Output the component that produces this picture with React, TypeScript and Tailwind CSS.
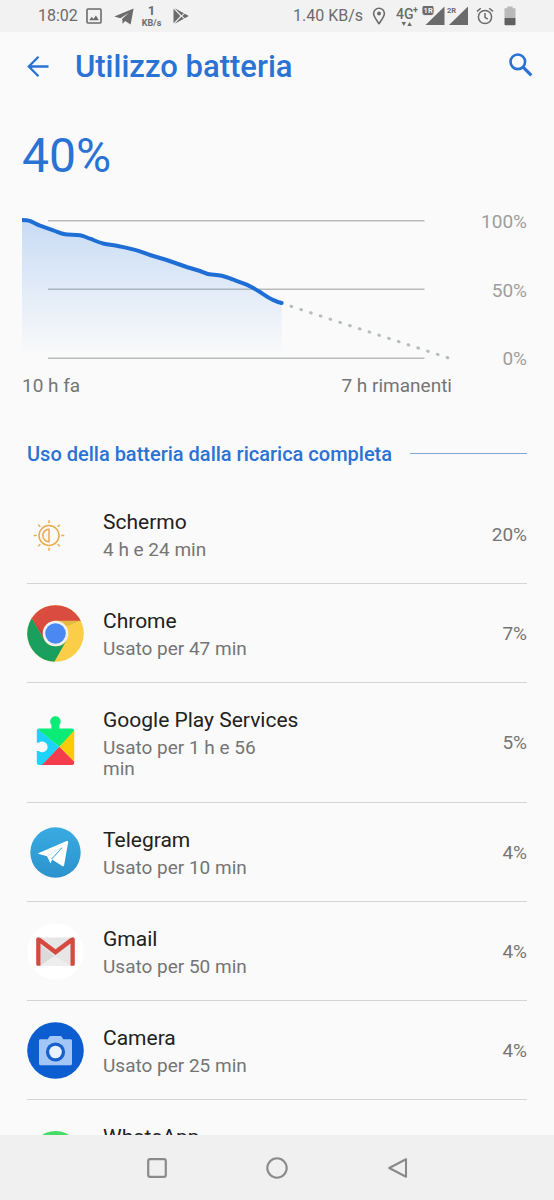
/**
 * BatteryUsage — battery level, discharge chart and per-app usage list.
 */

import type { ReactNode } from 'react';

interface UsageRow {
  name: string;
  detail?: string;
  percent?: string;
  icon: ReactNode;
}

const ROWS: UsageRow[] = [
  { name: 'Schermo', detail: '4 h e 24 min', percent: '20%', icon: <ScreenIcon /> },
  { name: 'Chrome', detail: 'Usato per 47 min', percent: '7%', icon: <ChromeIcon /> },
  {
    name: 'Google Play Services',
    detail: 'Usato per 1 h e 56 min',
    percent: '5%',
    icon: <PlayServicesIcon />,
  },
  { name: 'Telegram', detail: 'Usato per 10 min', percent: '4%', icon: <TelegramIcon /> },
  { name: 'Gmail', detail: 'Usato per 50 min', percent: '4%', icon: <GmailIcon /> },
  { name: 'Camera', detail: 'Usato per 25 min', percent: '4%', icon: <CameraIcon /> },
  { name: 'WhatsApp', icon: <WhatsAppIcon /> },
];

export default function App() {
  return (
    <div className="flex h-screen flex-col bg-[#fafafa] font-['Roboto',sans-serif] text-[#757575]">
      <StatusBar />
      <header className="flex h-[70px] shrink-0 items-center pr-[21px] pl-[27px]">
        <button type="button" aria-label="Indietro" className="text-[#2a72d4]">
          <svg viewBox="0 0 22 22" className="block size-[22px]" fill="none" stroke="currentColor" strokeWidth="2.3">
            <path d="M21.5 10.5H2M11.5 0.8L1.8 10.5l9.7 9.7" />
          </svg>
        </button>
        <h1 className="ml-[26px] flex-1 text-[31px] leading-9 font-medium text-[#2a72d4]">
          Utilizzo batteria
        </h1>
        <button type="button" aria-label="Cerca" className="text-[#2a72d4]">
          <svg viewBox="0 0 24 24" className="mb-1 block size-6" fill="none" stroke="currentColor">
            <circle cx="8.8" cy="8.8" r="7.3" strokeWidth="2.6" />
            <path d="M14.3 14.3l8 8" strokeWidth="3.2" />
          </svg>
        </button>
      </header>

      <main className="min-h-0 flex-1 overflow-hidden">
        <section className="pr-[27px] pl-[22px]">
          <p className="py-[26px] text-[48px] leading-[56px] text-[#2a72d4]">40%</p>
          <BatteryChart />
        </section>

        <section className="px-[27px] pt-11">
          <div className="flex items-center gap-[18px] pb-[19px]">
            <h2 className="text-[20px] leading-6 font-medium whitespace-nowrap text-[#2a72d4]">
              Uso della batteria dalla ricarica completa
            </h2>
            <div className="mb-0.5 h-px flex-1 bg-[#7fa9cf]" />
          </div>
          <ul>
            {ROWS.map((row) => (
              <li
                key={row.name}
                className="flex items-center gap-[19px] border-b border-[#d4d4d4] py-[22px]"
              >
                <div className="-my-2 w-[57px] shrink-0">{row.icon}</div>
                <div className="-mt-px mb-px min-h-[54px] flex-1">
                  <p className="text-[21px] leading-[33px] text-[#212121]">{row.name}</p>
                  {row.detail && (
                    <p className="max-w-[180px] text-[19px] leading-[21px]">{row.detail}</p>
                  )}
                </div>
                {row.percent && (
                  <span className="text-[19px] leading-[21px]">{row.percent}</span>
                )}
              </li>
            ))}
          </ul>
        </section>
      </main>

      <NavBar />
    </div>
  );
}

function StatusBar() {
  return (
    <div className="flex h-8 shrink-0 items-center justify-between bg-[#f2f2f2] px-[38px] text-[16px] leading-5 text-[#6b6b6b]">
      <div className="flex items-center">
        <span>18:02</span>
        <svg viewBox="0 0 16 16" className="ml-2 size-4" fill="none" stroke="currentColor" strokeWidth="1.6">
          <rect x="1" y="1" width="14" height="14" rx="1" />
          <path d="M3.3 12.2l2.4-3.4 1.8 2.1 2.4-3.4 3 4.7z" fill="currentColor" stroke="none" />
        </svg>
        <svg viewBox="0 0 20 17" className="ml-3 h-[17px] w-5" fill="currentColor">
          <path d="M0.3 8.6L19.6 0.4l-3 16.2-5.4-3.5-2.6 2.6-.4-4.9 6.9-6-8.8 5.4z" />
        </svg>
        <span className="ml-2 flex flex-col items-center font-bold">
          <span className="text-[13px] leading-[14px]">1</span>
          <span className="text-[9px] leading-[10px]">KB/s</span>
        </span>
        <svg viewBox="0 0 16 16" className="ml-3 size-4" fill="currentColor">
          <path d="M0.5 0.8v14.4L7.4 8z" />
          <path d="M1.6 0.3l9.3 4.9L8.4 7.3zM1.6 15.7l9.3-4.9-2.5-2.1zM11.8 5.7L15.8 8l-4 2.3L9.2 8z" />
        </svg>
      </div>
      <div className="flex items-center">
        <span>1.40 KB/s</span>
        <svg viewBox="0 0 14 18" className="ml-[9px] h-[18px] w-3.5" fill="none" stroke="currentColor" strokeWidth="1.6">
          <path d="M7 16.6C4 12.6 1.6 9.6 1.6 6.6a5.4 5.4 0 0 1 10.8 0c0 3-2.4 6-5.4 10z" />
          <circle cx="7" cy="6.6" r="2" fill="currentColor" stroke="none" />
        </svg>
        <svg viewBox="0 0 22 22" className="ml-2.5 size-[22px]" fill="currentColor">
          <text x="0" y="14" fontSize="14" fontWeight="500">4G</text>
          <text x="17" y="8" fontSize="9" fontWeight="700">+</text>
          <path d="M5.5 17h4.6l-2.3 4zM11.3 21h4.6l-2.3-4z" />
        </svg>
        <svg viewBox="0 0 24 20" className="ml-1 h-5 w-6" fill="currentColor">
          <path d="M22.5 0.5V19H3.5z" />
          <rect x="0" y="-1" width="12" height="10.5" rx="3" stroke="#f2f2f2" strokeWidth="0.8" />
          <text x="1.6" y="7.2" fontSize="7.5" fontWeight="700" fill="#f2f2f2">1R</text>
        </svg>
        <svg viewBox="0 0 24 20" className="h-5 w-6" fill="currentColor">
          <path d="M22 0.5V19H3z" />
          <rect x="0" y="0" width="11" height="8" fill="#f2f2f2" />
          <text x="1" y="6.6" fontSize="7.5" fontWeight="700">2R</text>
        </svg>
        <svg viewBox="0 0 18 18" className="ml-1.5 size-[18px]" fill="none" stroke="currentColor" strokeWidth="1.5">
          <circle cx="9" cy="10" r="6.6" />
          <path d="M9 6v4.3l2.8 1.8M1 4.4l3.8-3.2M17 4.4l-3.8-3.2" />
        </svg>
        <svg viewBox="0 0 12 20" className="ml-2.5 h-5 w-3">
          <path d="M3.3 0.5h5.4v1.8h2.8V12H0.5V2.3h2.8z" fill="#b9b9b9" />
          <path d="M0.5 12h11v6.3a1 1 0 0 1-1 1h-9a1 1 0 0 1-1-1z" fill="#616161" />
        </svg>
      </div>
    </div>
  );
}

const LEVEL_PATH =
  'M0 10C3 10 6 10.2 8 11C11 12 15 14.6 18 15.7L31.3 20.3C36 22 39 23.6 43 24.3S53 24.4 58 25.3S64.5 27.5 68 28.7S77 32.6 82 33.7S90 34.6 94.7 35.7S108 38.4 114.7 40.3S123 43.4 128 45L144.7 50L164.7 57L178 61C182 62.3 184 63.7 187.3 64.3S195 64.7 199.7 65.7S207 68.2 211.3 69.7S220 72.6 224.7 74.7S232 78.5 236.3 81S245 87 249.7 89.3S256 92.4 259.7 93';

function BatteryChart() {
  return (
    <>
      <div className="flex">
        <svg viewBox="0 0 430 161" className="block min-w-0 flex-1" role="img" aria-label="Livello batteria">
          <defs>
            <linearGradient id="level" x1="0" y1="0" x2="0" y2="1">
              <stop offset="0" stopColor="#2a7be4" stopOpacity="0.24" />
              <stop offset="1" stopColor="#2a7be4" stopOpacity="0" />
            </linearGradient>
          </defs>
          <path d="M26 10.7H402.5M26 79.3H402.5M26 148.3H402.5" stroke="#b9bbbb" strokeWidth="1.4" />
          <path d={`${LEVEL_PATH}V146H0Z`} fill="url(#level)" />
          <path d={LEVEL_PATH} fill="none" stroke="#1f6ed6" strokeWidth="4" />
          <circle cx="259.7" cy="93" r="2" fill="#1f6ed6" />
          <path
            d="M269 96.3L426 147.8"
            stroke="#b7bdbd"
            strokeWidth="3"
            strokeLinecap="round"
            strokeDasharray="0.8 9.47"
          />
        </svg>
        <div className="flex w-[75px] flex-col justify-between text-right text-[19px] leading-6 text-[#9e9e9e]">
          <span>100%</span>
          <span>50%</span>
          <span>0%</span>
        </div>
      </div>
      <div className="mt-[3px] mr-[75px] flex justify-between text-[19px] leading-6">
        <span>10 h fa</span>
        <span>7 h rimanenti</span>
      </div>
    </>
  );
}

function NavBar() {
  return (
    <nav className="flex h-[65px] shrink-0 items-center justify-center gap-24 bg-[#f0f0f0] text-[#8a8a8a]">
      <button type="button" aria-label="App recenti">
        <svg viewBox="0 0 24 24" className="block size-6" fill="none" stroke="currentColor" strokeWidth="2.2">
          <rect x="3.2" y="3.2" width="17.6" height="17.6" rx="1.8" />
        </svg>
      </button>
      <button type="button" aria-label="Home">
        <svg viewBox="0 0 24 24" className="block size-6" fill="none" stroke="currentColor" strokeWidth="2.1">
          <circle cx="12" cy="12" r="9.7" />
        </svg>
      </button>
      <button type="button" aria-label="Indietro">
        <svg viewBox="0 0 24 24" className="block size-6" fill="none" stroke="currentColor" strokeWidth="2.1" strokeLinejoin="round">
          <path d="M21 3.2v17.6L4.2 12z" />
        </svg>
      </button>
    </nav>
  );
}

function ScreenIcon() {
  return (
    <svg viewBox="0 0 57 57" className="block w-full" fill="none" stroke="#e9ab4c" strokeWidth="1.5">
      <circle cx="22" cy="29.5" r="10" />
      <path d="M22 23.3v12.4a6.2 6.2 0 0 1 0-12.4z" />
      <path d="M22 14.2v3M22 41.8v3M6.7 29.5h3M34.3 29.5h3M11.2 18.7l2.1 2.1M30.7 38.2l2.1 2.1M11.2 40.3l2.1-2.1M30.7 20.8l2.1-2.1" />
    </svg>
  );
}

function ChromeIcon() {
  return (
    <svg viewBox="0 0 57 57" className="block w-full">
      <defs>
        <clipPath id="chrome-disc">
          <circle cx="28.5" cy="28.5" r="28.3" />
        </clipPath>
      </defs>
      <g clipPath="url(#chrome-disc)">
        <rect width="57" height="57" fill="#fcce47" />
        <path d="M0 4.5l5.1 9.2 12.3 21.2a12.8 12.8 0 0 0 22.2 0L27.3 57H0z" fill="#19a05f" />
        <path d="M28.5 15.7H57V0H0l5.1 13.7 12.3 21.2z" fill="#d94c3f" />
        <path d="M28.5 15.7h24.9L40.5 21z" fill="#3e2723" fillOpacity="0.12" />
        <path d="M5.1 13.7l12.3 21.2-1-7z" fill="#3e2723" fillOpacity="0.15" />
      </g>
      <circle cx="28.5" cy="28.5" r="12.8" fill="#f1f1f1" />
      <circle cx="28.5" cy="28.5" r="10.3" fill="#4a88f2" />
    </svg>
  );
}

function PlayServicesIcon() {
  return (
    <svg viewBox="0 0 57 57" className="block w-full">
      <defs>
        <clipPath id="puzzle">
          <path d="M12 14.5h12.4V11a5.3 5.3 0 1 1 8 0v3.5H45a2.2 2.2 0 0 1 2.2 2.2v32.1A2.2 2.2 0 0 1 45 51H12a2.2 2.2 0 0 1-2.2-2.2V37h1.9a5.4 5.4 0 1 0 0-8.2H9.8V16.7A2.2 2.2 0 0 1 12 14.5z" />
        </clipPath>
      </defs>
      <g clipPath="url(#puzzle)">
        <path d="M8 12.5v40h6.2l18.1-19.7z" fill="#1ed3fa" />
        <path d="M8 12.5V0h41v16.7L32.3 32.8 10 14.6z" fill="#0bec77" />
        <path d="M49 14.5v35.1L32.3 32.8z" fill="#fbcb09" />
        <path d="M14.2 51.8h35v-2.2L32.3 32.8z" fill="#f53c4c" />
      </g>
    </svg>
  );
}

function TelegramIcon() {
  return (
    <svg viewBox="0 0 57 57" className="block w-full">
      <defs>
        <linearGradient id="telegram" x1="0" y1="0" x2="0" y2="1">
          <stop offset="0" stopColor="#39abe2" />
          <stop offset="1" stopColor="#2b92cc" />
        </linearGradient>
      </defs>
      <circle cx="28.5" cy="28.5" r="25.2" fill="url(#telegram)" />
      <path
        d="M11.8 28.9L39.6 17.1c1-.4 1.7.2 1.5 1.3l-4 22.8c-.2 1.2-1 1.5-2 .8l-10-6.6L36 22.8 20 32.2l-7.9-2.1c-1-.3-1-.9-.3-1.2z"
        fill="#fff"
      />
      <path d="M20 32.2l16-9.4-10.9 12.6-1.6 4z" fill="#fff" />
      <path d="M24.5 35L34.8 24" stroke="#45a9dc" strokeWidth="1" />
    </svg>
  );
}

function GmailIcon() {
  return (
    <svg viewBox="0 0 57 57" className="block w-full">
      <circle cx="28.5" cy="28.5" r="28.2" fill="#fff" />
      <rect x="9.5" y="14.5" width="38" height="28" rx="1.5" fill="#e6e6e6" />
      <path d="M13.5 42.5V22l15 12.5z" fill="#dadada" />
      <path d="M13.5 42.7l11.5-8.5 3.5-1 15 9.5z" fill="#eeeeee" />
      <path
        d="M9.2 16.6c0-1.6 1.2-2.4 2.6-2.2l1.7.6 15 11.3L43.5 15l1.7-.6c1.4-.2 2.6.6 2.6 2.2v24.6c0 .9-.6 1.5-1.5 1.5h-2.8V20.5l-15 11.6-15-11.6v22.2h-2.8c-.9 0-1.5-.6-1.5-1.5z"
        fill="#d54a40"
      />
    </svg>
  );
}

function CameraIcon() {
  return (
    <svg viewBox="0 0 57 57" className="block w-full">
      <circle cx="28.5" cy="28.5" r="28.3" fill="#0c5dd0" />
      <path
        d="M13.5 17.3h7.2l1.6-2.6c.3-.5.7-.7 1.2-.7h10c.5 0 .9.2 1.2.7l1.6 2.6h7.2c.9 0 1.5.6 1.5 1.5v23c0 .9-.6 1.5-1.5 1.5h-30c-.9 0-1.5-.6-1.5-1.5v-23c0-.9.6-1.5 1.5-1.5z"
        fill="#a3c6f7"
      />
      <circle cx="28.5" cy="30" r="9.6" fill="#1560cc" />
      <circle cx="28.5" cy="30" r="6.3" fill="#e9f1fc" />
    </svg>
  );
}

function WhatsAppIcon() {
  return (
    <svg viewBox="0 0 57 57" className="block w-full">
      <circle cx="28.5" cy="34.5" r="24.5" fill="#42dc66" />
      <path
        d="M21.5 26.5c-3.5 2-3 7 2.5 12.5s11 6.5 13 3l-4.5-3.5-2.5 2c-2.500-1-4.500-3-5.500-5.500l1.500-2.500z"
        fill="#fff"
      />
    </svg>
  );
}
